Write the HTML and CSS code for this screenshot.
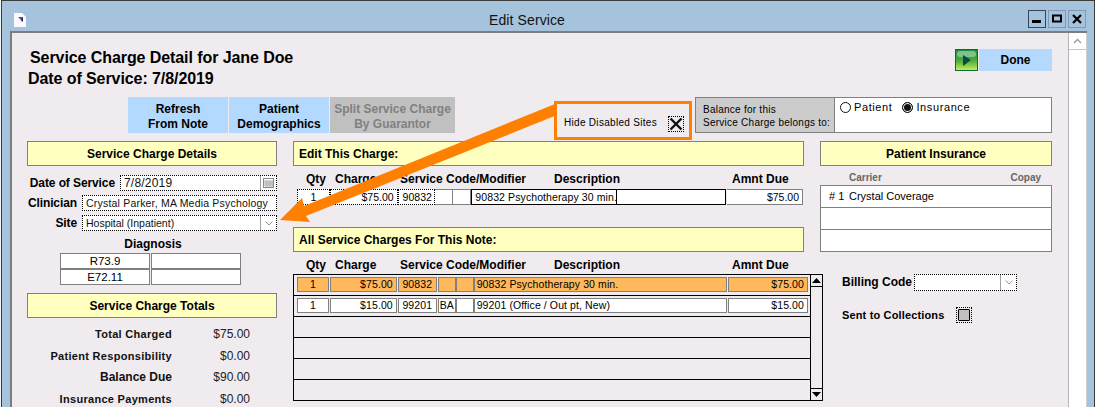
FILE: index.html
```html
<!DOCTYPE html>
<html lang="en">
<head>
<meta charset="utf-8">
<title>Edit Service</title>
<link rel="stylesheet" href="styles.css">
</head>
<body>
<div class="win">
  <header class="titlebar">
    <svg class="appicon" width="12" height="14" viewBox="0 0 12 14"><path d="M0 0H8L12 4V14H0Z" fill="#fbfbff"/><path d="M4 4H9L8 9L7 7Z" fill="#6a3fb0"/><path d="M7 7L9 4V9Z" fill="#2b2470"/></svg>
    <div class="wintitle">Edit Service</div>
    <div class="winbtns">
      <span class="wb wb-active"><svg width="10" height="10" viewBox="0 0 10 10"><rect x="0" y="6" width="9" height="3" fill="#000"/></svg></span>
      <span class="wb"><svg width="10" height="10" viewBox="0 0 10 10"><rect x="1" y="1.500" width="8" height="6" fill="none" stroke="#000" stroke-width="2"/></svg></span>
      <span class="wb"><svg width="10" height="10" viewBox="0 0 10 10"><path d="M1 1L9 9M9 1L1 9" stroke="#000" stroke-width="2.200"/></svg></span>
    </div>
  </header>
  <div class="pane">
    <main class="content">
      <div class="toprow">
        <div class="heading">
          <div class="h1">Service Charge Detail for Jane Doe</div>
          <div class="h2">Date of Service: 7/8/2019</div>
        </div>
        <div class="done">
          <svg class="doneicon" width="23" height="22" viewBox="0 0 23 22">
            <defs><linearGradient id="gr" x1="0" y1="0" x2="0" y2="1"><stop offset="0" stop-color="#1e8a3e"/><stop offset=".55" stop-color="#4fae3c"/><stop offset="1" stop-color="#c4f25a"/></linearGradient></defs>
            <rect x=".5" y=".5" width="22" height="21" fill="url(#gr)" stroke="#0c6a35"/>
            <rect x="2" y="2" width="19" height="6" rx="3" fill="#8fcf9a" opacity=".8"/>
            <path d="M8 6L16 11L8 17Z" fill="#0b4a45"/>
          </svg>
          <div class="donebtn">Done</div>
        </div>
      </div>
      <div class="toolbar">
        <div class="btn btn-a">Refresh<br>From Note</div>
        <div class="btn btn-b">Patient<br>Demographics</div>
        <div class="btn btn-c">Split Service Charge<br>By Guarantor</div>
        <div class="hide">
          <span>Hide Disabled Sites</span>
          <span class="xbox"><svg width="14" height="14" viewBox="0 0 14 14"><path d="M1.500 1.500L12.500 12.500M12.500 1.500L1.500 12.500" stroke="#111" stroke-width="2.400"/></svg></span>
        </div>
        <div class="balance">
          <div class="ballabel">Balance for this<br>Service Charge belongs to:</div>
          <div class="balopts">
            <span class="radio"></span><span class="radlabel">Patient</span>
            <span class="radio radio-on"></span><span class="radlabel">Insurance</span>
          </div>
        </div>
      </div>
      <div class="columns">
        <section class="left">
          <div class="band band-c">Service Charge Details</div>
          <div class="frow frow-date">
            <label class="lbl lbl-date">Date of Service</label>
            <div class="field field-date"><span class="ftext ftext-l">7/8/2019</span>
              <span class="ficon"><svg width="11" height="10" viewBox="0 0 11 10"><rect x=".5" y=".5" width="10" height="9" fill="#fff" stroke="#888"/><path d="M1 3H10M1 5H10M1 7H10M3 3V9M5 3V9M7 3V9M9 3V9" stroke="#aaa" stroke-width="1"/></svg></span>
            </div>
          </div>
          <div class="frow">
            <label class="lbl lbl-w">Clinician</label>
            <div class="field field-wide"><span class="ftext">Crystal Parker, MA Media Psychology</span></div>
          </div>
          <div class="frow">
            <label class="lbl lbl-w">Site</label>
            <div class="field field-wide"><span class="ftext ftext-s">Hospital (Inpatient)</span>
              <span class="ficon"><svg width="8" height="5" viewBox="0 0 8 5"><path d="M.5 .5L4 4L7.500 .5" fill="none" stroke="#999"/></svg></span>
            </div>
          </div>
          <div class="diaglabel">Diagnosis</div>
          <div class="diag">
            <div class="dcell">R73.9</div><div class="dcell"></div>
            <div class="dcell">E72.11</div><div class="dcell"></div>
          </div>
          <div class="band band-c band-tot">Service Charge Totals</div>
          <div class="tot tot-1"><span class="totl">Total Charged</span><span class="totv">$75.00</span></div>
          <div class="tot"><span class="totl">Patient Responsibility</span><span class="totv">$0.00</span></div>
          <div class="tot"><span class="totl totl-b">Balance Due</span><span class="totv">$90.00</span></div>
          <div class="tot"><span class="totl">Insurance Payments</span><span class="totv">$0.00</span></div>
        </section>
        <section class="mid">
          <div class="band band-l">Edit This Charge:</div>
          <div class="cols cols-1"><span class="c-q">Qty</span><span class="c-c">Charge</span><span class="c-s">Service Code/Modifier</span><span class="c-d">Description</span><span class="c-a">Amnt Due</span></div>
          <div class="editrow">
            <div class="ce dot ce-q">1</div>
            <div class="ce dot ce-c">$75.00</div>
            <div class="ce dot ce-s">90832</div>
            <div class="ce ce-m"></div>
            <div class="ce ce-m"></div>
            <div class="ce ce-d"><span class="ce-dt">90832 Psychotherapy 30 min.</span><span class="ce-dx"></span></div>
            <div class="ce ce-a">$75.00</div>
          </div>
          <div class="band band-l band-all">All Service Charges For This Note:</div>
          <div class="cols cols-2"><span class="c-q">Qty</span><span class="c-c">Charge</span><span class="c-s">Service Code/Modifier</span><span class="c-d">Description</span><span class="c-a">Amnt Due</span></div>
          <div class="table">
            <div class="rows">
              <div class="tr"><div class="cellrow sel"><div class="td td-q">1</div><div class="td td-c">$75.00</div><div class="td td-s">90832</div><div class="td td-m"></div><div class="td td-m"></div><div class="td td-d">90832 Psychotherapy 30 min.</div><div class="td td-a">$75.00</div></div></div>
              <div class="tr"><div class="cellrow"><div class="td td-q">1</div><div class="td td-c">$15.00</div><div class="td td-s">99201</div><div class="td td-m">BA</div><div class="td td-m"></div><div class="td td-d">99201 (Office / Out pt, New)</div><div class="td td-a">$15.00</div></div></div>
              <div class="tr"></div>
              <div class="tr"></div>
              <div class="tr"></div>
              <div class="tr tr-last"></div>
            </div>
            <div class="vbar">
              <div class="vb-btn"><svg width="9" height="5" viewBox="0 0 9 5"><path d="M4.500 0L9 5H0Z" fill="#000"/></svg></div>
              <div class="vb-btn vb-down"><svg width="9" height="5" viewBox="0 0 9 5"><path d="M0 0H9L4.500 5Z" fill="#000"/></svg></div>
            </div>
          </div>
        </section>
        <section class="right">
          <div class="band band-c">Patient Insurance</div>
          <div class="inshead"><span>Carrier</span><span>Copay</span></div>
          <div class="insbox">
            <div class="insrow"><span class="insnum"># 1</span><span>Crystal Coverage</span></div>
            <div class="insrow"></div>
            <div class="insrow"></div>
          </div>
          <div class="billing">
            <label class="lbl-b">Billing Code</label>
            <div class="field field-bill"><span class="ficon"><svg width="8" height="5" viewBox="0 0 8 5"><path d="M.5 .5L4 4L7.500 .5" fill="none" stroke="#999"/></svg></span></div>
          </div>
          <div class="sent">
            <label class="lbl-s">Sent to Collections</label>
            <span class="check"><span class="checkin"></span></span>
          </div>
        </section>
      </div>
    </main>
    <aside class="vscroll">
      <div class="vs-up"><svg width="9" height="6" viewBox="0 0 9 6"><path d="M1 5L4.500 1.500L8 5" fill="none" stroke="#9a9a9a" stroke-width="1.300"/></svg></div>
    </aside>
  </div>
</div>
<svg class="arrow" width="1095" height="407" viewBox="0 0 1095 407">
  <path d="M555 104L304 206L302 198L280 220L310 222L306 216L557 115Z" fill="#ff8000"/>
</svg>
</body>
</html>
```
FILE: styles.css
```css
* { box-sizing: border-box; }
html, body { margin: 0; height: 407px; overflow: hidden; }
body {
  width: 1095px;
  background: #f4f4f4;
  padding: 0 0 0 1px;
  font-family: "Liberation Sans", Arial, sans-serif;
  font-size: 12px;
  color: #000;
}
.arrow { position: absolute; left: 0; top: 0; pointer-events: none; }
.win { height: 407px; background: #a6c3de; display: flex; flex-direction: column; overflow: hidden; border: 1px solid #3c3c3c; border-bottom: 0; }

.titlebar { height: 30px; flex: none; display: flex; align-items: flex-start; position: relative; }
.appicon { margin: 12px 0 0 12px; flex: none; }
.wintitle { position: absolute; left: 0; right: 42px; top: 11px; text-align: center; font-size: 14px; letter-spacing: .1px; line-height: 17px; color: #111; }
.winbtns { margin-left: auto; margin-top: 9px; margin-right: 8px; display: flex; gap: 2px; }
.wb { width: 18px; height: 18px; border: 1px solid #7f9ab8; display: flex; align-items: center; justify-content: center; }
.wb-active { border-color: #33465c; }

.pane { flex: 1; min-height: 0; display: flex; margin: 0 7px 0 8px; border-top: 2px solid #7d7d7d; border-left: 2px solid #7d7d7d; background: #efebef; }
.content { flex: 1; min-width: 0; padding: 0 0 0 15px; }
.vscroll { width: 19px; flex: none; background: #fff; border-left: 1px solid #b5b5b5; border-right: 1px solid #d0d0d0; }
.vs-up { height: 17px; border-bottom: 1px solid #c8c8c8; display: flex; align-items: center; justify-content: center; }

.toprow { height: 64px; width: 1025px; display: flex; justify-content: space-between; }
.heading { padding: 14px 0 0 3px; font-weight: 700; font-size: 16px; line-height: 21px; letter-spacing: -.08px; }
.h2 { margin-left: -2px; }
.done { display: flex; margin-top: 16px; height: 22px; }
.doneicon { display: block; margin-right: 1px; }
.donebtn { width: 73px; background: #b3d9ff; font-weight: 700; font-size: 12px; line-height: 23px; text-align: center; }

.toolbar { height: 44px; display: flex; align-items: flex-start; }
.btn { height: 36px; margin-right: 1px; padding-top: 5px; font-weight: 700; line-height: 15px; text-align: center; background: #b3d9ff; }
.btn-a { width: 100px; margin-left: 101px; }
.btn-b { width: 100px; }
.btn-c { width: 125px; background: #c0c0c0; color: #808080; margin-right: 0; }
.hide { width: 138px; height: 39px; margin: 4px 0 0 99px; border: 3px solid #ff8000; display: flex; align-items: center; justify-content: space-between; padding: 3px 5px 0 7px; font-size: 10px; letter-spacing: .3px; flex: none; }
.xbox { width: 16px; height: 16px; margin-top: 3px; border: 1px dotted #000; display: flex; align-items: center; justify-content: center; background: #efebef; }
.balance { width: 357px; height: 36px; margin-left: 3px; border: 1px solid #808080; display: flex; flex: none; background: #fff; }
.ballabel { width: 139px; background: #cccccc; border-right: 1px solid #808080; padding: 5px 0 0 7px; font-size: 10px; line-height: 13px; letter-spacing: .25px; }
.balopts { display: flex; align-items: flex-start; padding: 3px 0 0 5px; font-size: 11px; line-height: 13px; letter-spacing: .6px; }
.radio { width: 11px; height: 11px; border: 1px solid #111; border-radius: 50%; margin-top: 1px; background: #fff; }
.radio-on { margin-left: 10px; background: #111; box-shadow: inset 0 0 0 1px #fff; }
.radlabel { margin-left: 3px; }

.columns { display: grid; grid-template-columns: 250px 511px 232px; column-gap: 16px; align-items: start; }
.band { height: 25px; border: 1px solid #808080; background: #ffffc0; font-weight: 700; line-height: 24px; }
.band-c { text-align: center; }
.band-l { padding-left: 5px; }

.frow { display: flex; justify-content: flex-end; align-items: center; height: 16px; margin-top: 4px; }
.frow-date { margin-top: 9px; }
.lbl { font-weight: 700; text-align: right; margin-right: 5px; letter-spacing: -.1px; }
.lbl-date { flex: none; }
.lbl-w { flex: 1; margin-right: 5px; }
.field { height: 16px; border: 1px dotted #000; background: #fff; display: flex; align-items: center; position: relative; flex: none; }
.field-date { width: 157px; }
.field-wide { width: 195px; }
.field-bill { width: 103px; height: 17px; justify-content: flex-end; }
.ftext { padding-left: 3px; font-size: 10.500px; letter-spacing: .2px; white-space: nowrap; flex: 1; color: #111; }
.ftext-l { font-size: 12px; }
.ftext-s { font-size: 10.500px; letter-spacing: 0; }
.ficon { width: 16px; height: 100%; border-left: 1px solid #a0a0a0; display: flex; align-items: center; justify-content: center; flex: none; }

.diaglabel { margin-top: 6px; text-align: center; font-weight: 700; line-height: 14px; padding-left: 2px; }
.diag { margin: 2px 0 0 33px; display: grid; grid-template-columns: 90px 90px; column-gap: 1px; row-gap: 0; }
.dcell { height: 16px; border: 1px solid #808080; background: #fff; text-align: center; font-size: 11.500px; line-height: 14px; }
.band-tot { margin-top: 8px; }
.tot { display: flex; align-items: center; height: 21.700px; }
.tot-1 { margin-top: 5px; }
.totl { width: 145px; text-align: right; font-weight: 700; font-size: 11px; letter-spacing: .3px; color: #111; }
.totl-b { font-size: 12px; letter-spacing: 0; }
.totv { width: 78px; text-align: right; font-size: 12px; color: #222; }

.cols { display: flex; font-weight: 700; line-height: 14px; padding-left: 13px; white-space: nowrap; }
.cols-1 { margin-top: 6px; height: 17px; }
.cols-2 { margin-top: 6px; height: 15px; }
.c-q { width: 29px; }
.c-c { width: 65px; }
.c-s { width: 154px; }
.c-d { width: 178px; }

.editrow { display: flex; height: 16px; margin: 0 1px 0 4px; }
.ce { border: 1px solid #808080; border-left-width: 0; background: #fff; font-size: 10.500px; line-height: 14px; white-space: nowrap; }
.dot { border: 1px dotted #000; }
.ce-q { width: 33px; text-align: center; }
.ce-c { width: 68px; text-align: right; padding-right: 3px; }
.ce-s { width: 38px; padding-left: 4px; }
.ce-m { width: 18px; background: #fff; }
.ce-d { width: 256px; border: 1px solid #000; display: flex; margin-left: 0; }
.ce-dt { width: 145px; border-right: 1px solid #000; padding-left: 3px; letter-spacing: .1px; }
.ce-dx { flex: 1; }
.ce-a { width: 76px; text-align: right; padding-right: 3px; border-left: 0; margin-left: 1px; }

.band-all { margin-top: 22px; }
.table { width: 530px; height: 127px; border: 1px solid #000; display: flex; background: #efebef; margin-top: 1px; }
.rows { flex: 1; min-width: 0; }
.tr { height: 21px; border-bottom: 1px solid #000; padding: 2px 2px 0 3px; }
.tr-last { border-bottom: 0; height: 20px; }
.cellrow { display: flex; height: 15px; }
.td { border: 1px solid #808080; background: #fff; font-size: 10.500px; line-height: 13px; white-space: nowrap; margin-right: 1px; letter-spacing: .1px; }
.sel .td { background: #ffb85c; }
.td-q { width: 32px; text-align: center; }
.td-c { width: 67px; text-align: right; padding-right: 3px; }
.td-s { width: 39px; text-align: center; }
.td-m { width: 18px; margin-right: 0; padding-left: 1px; letter-spacing: 0; }
.td-d { width: 254px; padding-left: 2px; }
.td-a { width: 80px; text-align: right; padding-right: 3px; margin-right: 0; }
.vbar { width: 12px; flex: none; border-left: 1px solid #000; display: flex; flex-direction: column; justify-content: space-between; }
.vb-btn { height: 12px; border-bottom: 1px solid #000; display: flex; align-items: center; justify-content: center; }
.vb-down { border-bottom: 0; border-top: 1px solid #000; }

.inshead { display: flex; justify-content: space-between; height: 19px; padding: 5px 11px 0 29px; font-size: 10px; font-weight: 700; color: #666; line-height: 13px; }
.insbox { border: 1px solid #808080; background: #fff; }
.insrow { height: 22px; border-bottom: 1px solid #808080; padding-left: 8px; font-size: 11px; line-height: 21px; display: flex; }
.insrow:last-child { border-bottom: 0; height: 21px; }
.insnum { width: 20px; }
.billing { display: flex; align-items: center; margin: 21px 0 0 22px; height: 18px; }
.lbl-b { width: 72px; font-weight: 700; font-size: 12px; }
.sent { display: flex; align-items: center; margin: 15px 0 0 22px; height: 17px; }
.lbl-s { width: 114px; font-weight: 700; font-size: 11px; letter-spacing: .15px; white-space: nowrap; }
.check { width: 16px; height: 16px; border: 1px dotted #000; padding: 1px; }
.checkin { display: block; height: 100%; background: #c0c0c0; border: 1px solid #000; border-radius: 1px; }
```
